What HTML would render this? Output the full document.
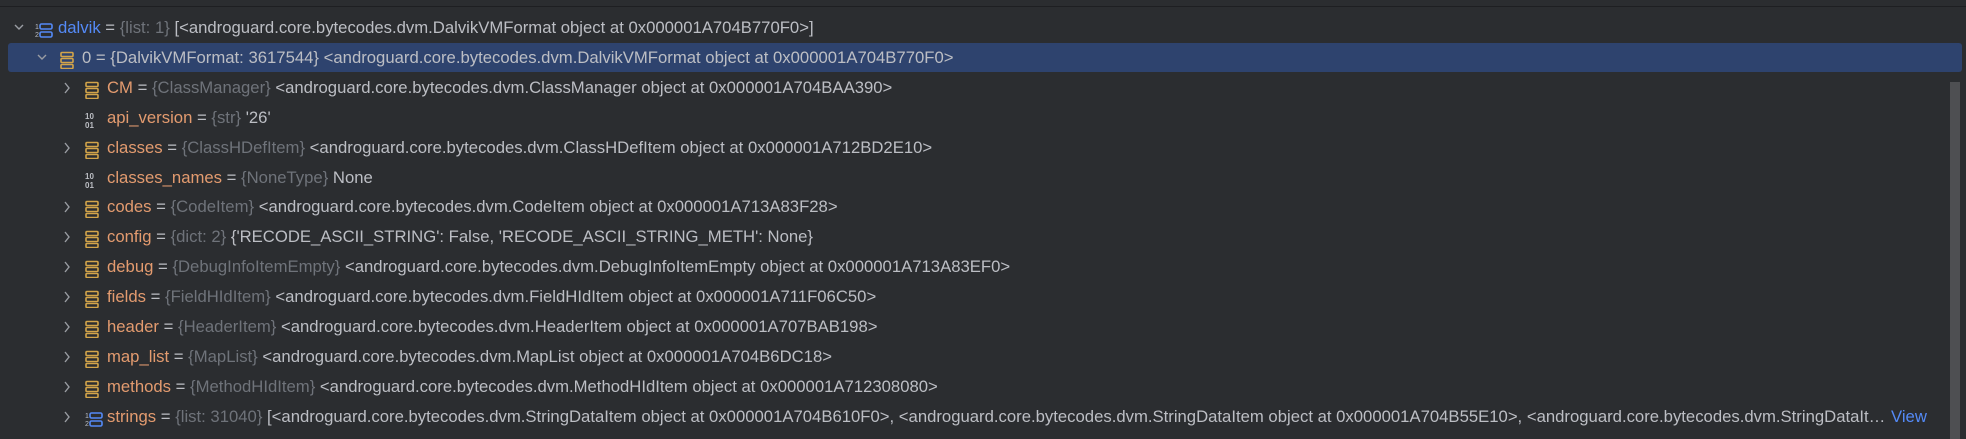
<!DOCTYPE html>
<html><head><meta charset="utf-8"><style>
body{margin:0;width:1966px;height:439px;background:#2b2d30;overflow:hidden;font-family:"Segoe UI","Liberation Sans",sans-serif;font-size:16.7px;color:#bcbec4;position:relative}
.top{position:absolute;left:0;top:0;width:1966px;height:6px;background:#2b2d30;border-bottom:1px solid #1e1f22}
.sel{position:absolute;left:8px;top:43px;width:1954px;height:29px;background:#2e436e;border-radius:3px}
.row{position:absolute;left:0;height:30px;line-height:30px;white-space:nowrap}
.chev{position:absolute;top:0;width:12px;height:30px}
.ic{position:absolute;top:6px}
.t{position:absolute;top:0}
.n{color:#e39b6f}
.b{color:#548af7}
.g{color:#6f737a}
.sb{position:absolute;left:1950px;top:82px;width:10px;height:357px;background:#4e4f52}
.clip{overflow:hidden;text-overflow:ellipsis;width:1781px}
.view{position:absolute;left:1891px;top:0;color:#548af7}
</style></head><body>
<div class="top"></div>
<div class="sel"></div>
<div class="sb"></div>
<div id="rows"></div>
<script>
var down='<svg width="12" height="30"><path d="M2 12 L6 16 L10 12" stroke="#9a9da3" stroke-width="1.4" fill="none"/></svg>';
var right='<svg width="12" height="30"><path d="M4 10 L8 15 L4 20" stroke="#9a9da3" stroke-width="1.4" fill="none"/></svg>';
var obj='<svg width="14" height="18"><g fill="none" stroke="#d2a44a" stroke-width="1.6"><rect x="1" y="1.5" width="12" height="4" rx="1"/><rect x="1" y="7.5" width="12" height="4" rx="1"/><rect x="1" y="13.5" width="12" height="4" rx="1"/></g></svg>';
var list='<svg width="18" height="18"><text x="0" y="8" font-size="7" fill="#bcbec4" font-family="Liberation Sans">1</text><text x="0" y="16" font-size="7" fill="#bcbec4" font-family="Liberation Sans">2</text><g fill="none" stroke="#548af7" stroke-width="1.6"><rect x="5" y="3" width="12" height="5" rx="1.5"/><rect x="5" y="11" width="12" height="5" rx="1.5"/></g></svg>';
var bin='<svg width="14" height="18"><text x="0" y="8" font-size="8" font-weight="bold" fill="#bcbec4" font-family="Liberation Sans">10</text><text x="0" y="17" font-size="8" font-weight="bold" fill="#bcbec4" font-family="Liberation Sans">01</text></svg>';
var A='androguard.core.bytecodes.dvm.';
var rows=[
[0,down,list,'<span class="b">dalvik</span> = <span class="g">{list: 1}</span> [&lt;'+A+'DalvikVMFormat object at 0x000001A704B770F0&gt;]'],
[1,down,obj,'0 = {DalvikVMFormat: 3617544} &lt;'+A+'DalvikVMFormat object at 0x000001A704B770F0&gt;'],
[2,right,obj,'<span class="n">CM</span> = <span class="g">{ClassManager}</span> &lt;'+A+'ClassManager object at 0x000001A704BAA390&gt;'],
[2,'',bin,'<span class="n">api_version</span> = <span class="g">{str}</span> \'26\''],
[2,right,obj,'<span class="n">classes</span> = <span class="g">{ClassHDefItem}</span> &lt;'+A+'ClassHDefItem object at 0x000001A712BD2E10&gt;'],
[2,'',bin,'<span class="n">classes_names</span> = <span class="g">{NoneType}</span> None'],
[2,right,obj,'<span class="n">codes</span> = <span class="g">{CodeItem}</span> &lt;'+A+'CodeItem object at 0x000001A713A83F28&gt;'],
[2,right,obj,'<span class="n">config</span> = <span class="g">{dict: 2}</span> {\'RECODE_ASCII_STRING\': False, \'RECODE_ASCII_STRING_METH\': None}'],
[2,right,obj,'<span class="n">debug</span> = <span class="g">{DebugInfoItemEmpty}</span> &lt;'+A+'DebugInfoItemEmpty object at 0x000001A713A83EF0&gt;'],
[2,right,obj,'<span class="n">fields</span> = <span class="g">{FieldHIdItem}</span> &lt;'+A+'FieldHIdItem object at 0x000001A711F06C50&gt;'],
[2,right,obj,'<span class="n">header</span> = <span class="g">{HeaderItem}</span> &lt;'+A+'HeaderItem object at 0x000001A707BAB198&gt;'],
[2,right,obj,'<span class="n">map_list</span> = <span class="g">{MapList}</span> &lt;'+A+'MapList object at 0x000001A704B6DC18&gt;'],
[2,right,obj,'<span class="n">methods</span> = <span class="g">{MethodHIdItem}</span> &lt;'+A+'MethodHIdItem object at 0x000001A712308080&gt;'],
[2,right,list,'<span class="n">strings</span> = <span class="g">{list: 31040}</span> [&lt;'+A+'StringDataItem object at 0x000001A704B610F0&gt;, &lt;'+A+'StringDataItem object at 0x000001A704B55E10&gt;, &lt;'+A+'StringDataItem object at 0x000001A704B55E80&gt;]',1]
];
var chx=[13,36,61],icx=[35,60,85],tx=[58,82,107],h='';
rows.forEach(function(r,i){var y=13+i*29.9;var L=r[0];
h+='<div class="row" style="top:'+y+'px;width:1945px;overflow:hidden"><div class="chev" style="left:'+chx[L]+'px">'+r[1]+'</div><div class="ic" style="left:'+icx[L]+'px">'+r[2]+'</div><div class="t'+(r[4]?' clip':'')+'" style="left:'+tx[L]+'px">'+r[3]+'</div>'+(r[4]?'<div class="view">View</div>':'')+'</div>';});
document.getElementById('rows').innerHTML=h;
</script>
</body></html>
